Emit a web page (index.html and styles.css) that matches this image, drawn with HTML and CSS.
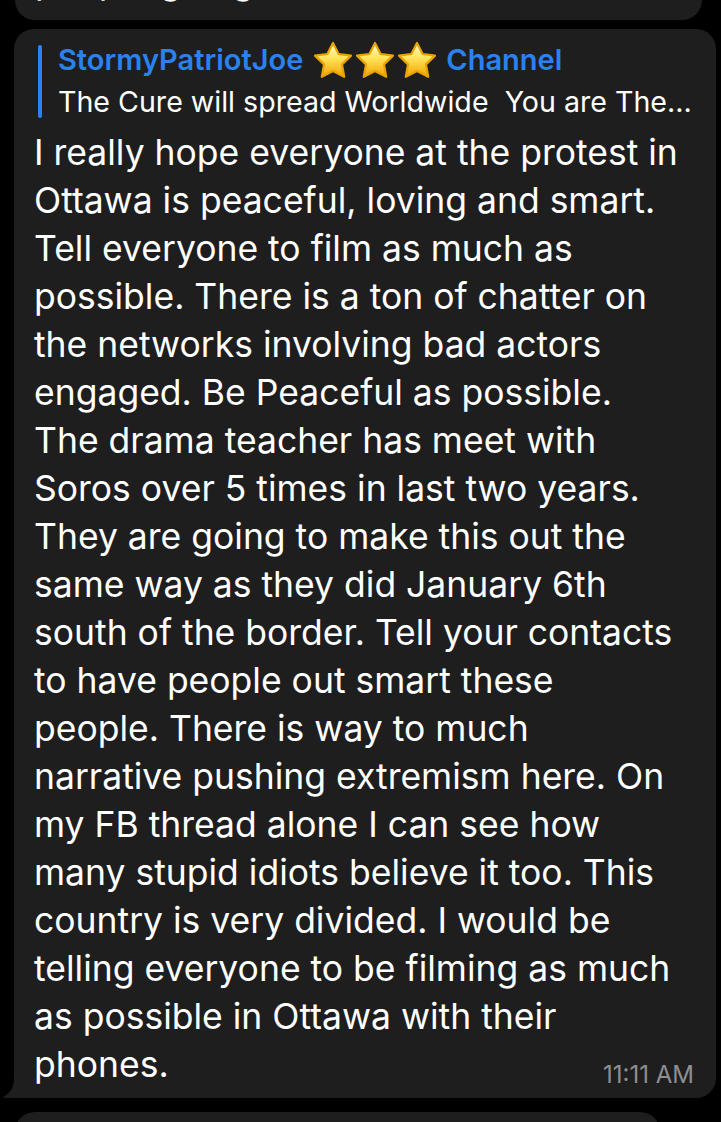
FILE: index.html
```html
<!DOCTYPE html>
<html lang="en">
<head>
<meta charset="utf-8">
<title>Chat</title>
<link rel="stylesheet" href="styles.css">
</head>
<body>
<div class="chat">
  <div class="bubble prev">
    <div class="last-row">
      <span class="last-text">people going.</span>
      <span class="time">11:11 AM</span>
    </div>
  </div>

  <div class="bubble main">
    <div class="reply">
      <div class="reply-bar"></div>
      <div class="reply-body">
        <div class="reply-name">
          <span class="name">StormyPatriotJoe</span>
          <span class="stars">
            <svg class="star" viewBox="0 0 38 36" width="38" height="36" aria-hidden="true">
              <defs>
                <linearGradient id="sg" x1="0" y1="0" x2="0" y2="1">
                  <stop offset="0" stop-color="#fffbd0"/>
                  <stop offset="0.45" stop-color="#ffe45a"/>
                  <stop offset="1" stop-color="#f3a200"/>
                </linearGradient>
              </defs>
              <polygon points="19,1 24.6,12 37,13.6 28,22.4 30.2,34.8 19,29 7.8,34.8 10,22.4 1,13.6 13.4,12" fill="url(#sg)" stroke="#e9a300" stroke-width="2.2" stroke-linejoin="round"/>
            </svg>
            <svg class="star" viewBox="0 0 38 36" width="38" height="36" aria-hidden="true">
              <polygon points="19,1 24.6,12 37,13.6 28,22.4 30.2,34.8 19,29 7.8,34.8 10,22.4 1,13.6 13.4,12" fill="url(#sg)" stroke="#e9a300" stroke-width="2.2" stroke-linejoin="round"/>
            </svg>
            <svg class="star" viewBox="0 0 38 36" width="38" height="36" aria-hidden="true">
              <polygon points="19,1 24.6,12 37,13.6 28,22.4 30.2,34.8 19,29 7.8,34.8 10,22.4 1,13.6 13.4,12" fill="url(#sg)" stroke="#e9a300" stroke-width="2.2" stroke-linejoin="round"/>
            </svg>
          </span>
          <span class="name">Channel</span>
        </div>
        <div class="reply-text">The Cure will spread Worldwide &nbsp;You are The...</div>
      </div>
    </div>
    <div class="msg-text">I really hope everyone at the protest in<br>Ottawa is peaceful, loving and smart.<br>Tell everyone to film as much as<br>possible. There is a ton of chatter on<br>the networks involving bad actors<br>engaged. Be Peaceful as possible.<br>The drama teacher has meet with<br>Soros over 5 times in last two years.<br>They are going to make this out the<br>same way as they did January 6th<br>south of the border. Tell your contacts<br>to have people out smart these<br>people. There is way to much<br>narrative pushing extremism here. On<br>my FB thread alone I can see how<br>many stupid idiots believe it too. This<br>country is very divided. I would be<br>telling everyone to be filming as much<br>as possible in Ottawa with their</div>
    <div class="last-row">
      <span class="last-text">phones.</span>
      <span class="time">11:11 AM</span>
    </div>
    <svg class="tail" viewBox="0 0 30 30" width="30" height="30" aria-hidden="true">
      <path d="M11,0 H30 V30 H6 C3,30 1,29.6 0,29 C6,26 11,21 11,10 Z" fill="#1e1e1f"/>
    </svg>
  </div>

  <div class="bubble next"></div>
</div>
</body>
</html>
```

FILE: styles.css
```css
html, body {
  margin: 0;
  padding: 0;
}

body {
  background: #000;
  width: 721px;
  height: 1122px;
  overflow: hidden;
  font-family: Inter, "Noto Sans", "Liberation Sans", sans-serif;
  color: #fff;
}

.chat {
  display: flex;
  flex-direction: column;
}

.bubble {
  background: #1e1e1f;
  border-radius: 20px;
  position: relative;
  box-sizing: border-box;
}

.bubble.prev {
  margin-top: -42px;
  margin-left: 15px;
  width: 687px;
  padding: 0 22px 14px 20px;
}

.bubble.main {
  margin-top: 9px;
  margin-left: 14px;
  width: 702px;
  padding: 13px 22px 9px 20px;
}

.bubble.next {
  margin-top: 14px;
  margin-left: 15px;
  width: 645px;
  height: 60px;
}

.reply {
  display: flex;
  margin-left: 4px;
  gap: 16px;
}

.reply-bar {
  width: 4px;
  border-radius: 2px;
  background: #2a82f0;
  margin: 3px 0 8px 0;
  flex: none;
}

.reply-body {
  min-width: 0;
}

.reply-name {
  display: flex;
  align-items: center;
  height: 36px;
  line-height: 36px;
  font-size: 29px;
  font-weight: 600;
  color: #2a82f0;
  white-space: nowrap;
}

.stars {
  display: inline-flex;
  gap: 4px;
  margin: 0 10px 0 11px;
}

.star {
  display: block;
  overflow: visible;
}

.reply-text {
  font-size: 28.6px;
  line-height: 48px;
  white-space: nowrap;
  color: #fff;
}

.msg-text {
  margin-top: 3px;
  font-size: 35.5px;
  line-height: 48px;
  white-space: nowrap;
}

.last-row {
  display: flex;
  justify-content: space-between;
  font-size: 35.5px;
  line-height: 48px;
  white-space: nowrap;
}

.time {
  align-self: flex-end;
  margin-bottom: 2px;
  font-size: 24px;
  line-height: 24px;
  color: #8e8e93;
}

.tail {
  position: absolute;
  left: -11px;
  bottom: 0;
  display: block;
}
```
